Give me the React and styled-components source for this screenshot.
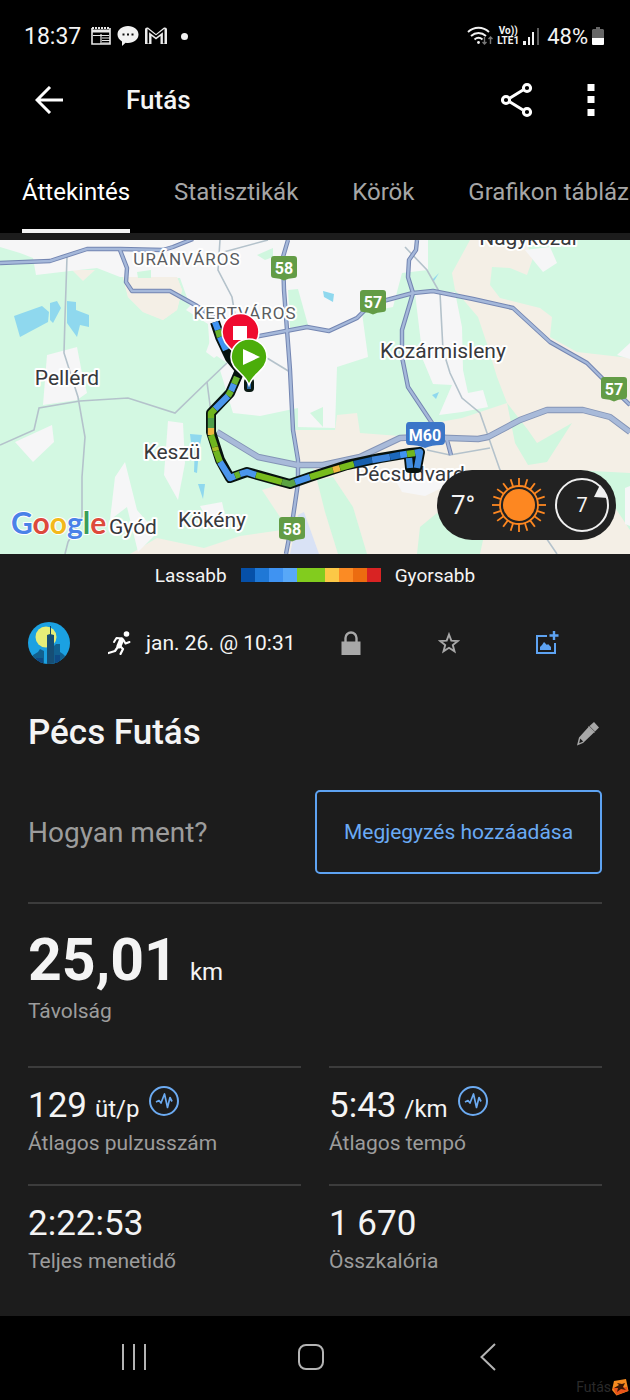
import React from "react";
import styled, { createGlobalStyle } from "styled-components";

const tabs = ["Áttekintés", "Statisztikák", "Körök", "Grafikon táblázatok"];

const paceColors = [
    "#0650a8",
    "#1f78d6",
    "#3f93f2",
    "#58a8f8",
    "#82cc1e",
    "#82cc1e",
    "#fcc846",
    "#fb8b24",
    "#ec6c10",
    "#d92323",
];

const stats = [
    { value: "129", unit: "üt/p", label: "Átlagos pulzusszám", chart: true },
    { value: "5:43", unit: "/km", label: "Átlagos tempó", chart: true },
    { value: "2:22:53", label: "Teljes menetidő" },
    { value: "1 670", label: "Összkalória" },
];

const urban = [
    "0,0 0,7 20,13 33,18 36,35 70,31 97,28 120,37 180,38 190,66 186,70 208,84 210,112 220,117 208,110 227,123 220,130 233,173 260,176 298,168 298,187 335,188 337,127 368,117 362,73 393,67 402,33 428,30 428,0",
    "415,53 455,52 462,87 463,130 468,153 483,150 488,167 462,172 439,175 452,145 433,144 423,120",
    "47,115 77,107 82,133 87,153 77,160 43,165",
    "15,202 52,185 54,202 33,222",
    "168,181 183,183 185,223 178,260 164,235",
    "125,222 137,270 157,293 138,312 127,267 110,280 115,237",
    "200,266 222,262 226,280 210,284",
    "217,82 206,112 214,118 228,108",
];

const farmland = [
    "470,0 452,33 455,50 478,77 488,107 497,137 507,163 462,178 440,182 400,196 360,193 357,173 337,175 335,190 293,190 299,222 320,232 262,250 282,280 278,314 630,314 630,118 577,112 550,97 552,77 540,68 500,58 490,45 492,27 510,28 527,35 533,18 525,0",
    "72,30 95,30 83,41",
    "123,37 177,37 182,50 177,70 163,80 143,72 128,57",
    "130,314 157,298 204,308 240,296 282,290 282,314",
];

const parks = [
    "288,50 298,49 308,85 290,88",
    "257,15 273,8 273,17 265,20",
    "137,32 151,30 151,38 138,38",
    "310,173 323,167 323,187",
    "507,163 528,190 537,203 572,183 547,222 528,225 515,203",
    "317,240 333,237 353,267 367,314 338,314 325,272",
    "573,230 630,233 630,290 610,260",
    "417,314 420,287 437,273 483,300 480,314",
];

const settlements = [
    "525,10 543,32 557,23 550,7",
    "617,115 630,103 630,119",
    "625,248 630,246 630,286 625,284",
    "394,238 426,230 450,244 425,256 402,252",
];

const water = [
    "14,76 42,66 49,72 48,82 20,97",
    "50,63 57,61 61,68 53,83 50,80",
    "67,61 76,62 76,70 89,75 89,87 80,85 77,97 67,83",
    "190,194 202,195 199,210 197,233 194,232 195,203 191,203",
    "198,244 205,244 203,259",
    "323,51 334,54 333,62 324,57",
    "432,155 439,152 436,159",
    "432,40 439,33 434,41",
];

const lanes = [
    "67,17 65,77 64,113 78,157 85,197 82,237 82,277 68,302 65,314",
    "0,205 34,190 39,168 80,161 128,158 175,173 207,142 227,123",
    "207,142 210,165 211,175",
    "267,118 290,132",
    "220,0 218,30 232,57 235,75",
    "220,13 268,0",
    "405,7 427,30 440,53 443,110 450,133 462,158 480,173 500,230 557,314",
    "427,210 450,215 490,208",
];

const roads = [
    "0,23 50,21 87,9 120,9 163,10 173,7 193,-1",
    "120,10 127,28 126,42 132,51 170,51 197,66 215,78",
    "288,0 283,17 284,50 290,130 293,190 298,220 298,243 293,277 286,314",
    "254,97 307,87 329,91 357,78 367,68 383,61 413,53 433,51 473,59 513,68 550,102 587,123 602,138 630,165",
    "417,0 416,10 409,20 408,37 413,53 402,90 402,117 408,147 432,183 447,200 451,215",
];

const motorway =
    "217,192 258,217 297,225 323,225 360,217 400,198 420,197 478,199 488,197 520,180 547,170 583,170 610,177 630,192";

const route =
    "215,82 220,97 230,118 240,130 237,137 230,153 211,173 211,192 220,220 230,238 247,232 290,244 310,237 347,225 380,218 410,213 420,212 417,228 410,228 409,218";

const pace = [
    ["215,82 218,90", "#3f93f2"],
    ["218,90 220,97", "#69b32d"],
    ["220,97 226,110", "#3f93f2"],
    ["237,137 234,144", "#69b32d"],
    ["234,144 231,151", "#4b96ec"],
    ["231,151 228,156", "#69b32d"],
    ["228,156 215,169", "#4b96ec"],
    ["215,169 211,173 211,178", "#6fb51f"],
    ["211,178 211,188", "#4c9e49"],
    ["211,188 211,195", "#efb742"],
    ["211,195 215,207", "#6fb51f"],
    ["215,207 216,211", "#a8bd22"],
    ["216,211 220,222", "#6fb51f"],
    ["220,222 230,238 235,236", "#4b96ec"],
    ["235,236 240,234", "#69b32d"],
    ["240,234 247,232 256,235", "#4b96ec"],
    ["256,235 282,242", "#78bc1d"],
    ["282,242 290,244 295,242", "#5ba243"],
    ["295,242 310,237", "#4b96ec"],
    ["310,237 333,230", "#78bc1d"],
    ["333,230 340,228", "#efb742"],
    ["340,228 354,224", "#78bc1d"],
    ["354,224 372,220", "#175fae"],
    ["372,220 390,217", "#3f86dc"],
    ["390,217 400,215", "#1c68bb"],
    ["400,215 407,214", "#3f93f2"],
    ["407,214 415,213", "#6fb51f"],
    ["415,213 420,212 417,228", "#3f8be0"],
    ["410,228 409,218", "#3f8be0"],
];

const places = [
    { name: "Nagykozár", x: 529, y: 5 },
    { name: "Kozármisleny", x: 443, y: 118 },
    { name: "Pellérd", x: 67, y: 145 },
    { name: "Keszü", x: 172, y: 219 },
    { name: "Kökény", x: 212, y: 287 },
    { name: "Gyód", x: 133, y: 294 },
    { name: "Pécsudvard", x: 410, y: 241 },
];

const shields = [
    { text: "58", x: 284, y: 29 },
    { text: "57", x: 373, y: 63 },
    { text: "57", x: 614, y: 150 },
    { text: "58", x: 292, y: 290 },
];

const sunRays = Array.from({ length: 20 }, (_, i) => i * 18);

const App = () => {
    return (
        <Screen>
            <GlobalStyle />
            <StatusBar>
                <StatusGroup>
                    <span>18:37</span>
                    <NewsIcon />
                    <ChatIcon />
                    <MailIcon />
                    <Dot />
                </StatusGroup>
                <StatusGroup $tight>
                    <WifiIcon />
                    <Volte>
                        <span>Vo))</span>
                        <span>LTE1</span>
                    </Volte>
                    <SignalIcon />
                    <Percent>48%</Percent>
                    <BatteryIcon />
                </StatusGroup>
            </StatusBar>

            <AppBar>
                <IconButton aria-label="Vissza">
                    <BackIcon />
                </IconButton>
                <h1>Futás</h1>
                <IconButton aria-label="Megosztás">
                    <ShareIcon />
                </IconButton>
                <IconButton aria-label="Továbbiak">
                    <MoreIcon />
                </IconButton>
            </AppBar>

            <Tabs role="tablist">
                {tabs.map((tab, idx) => (
                    <Tab
                        key={tab}
                        role="tab"
                        aria-selected={idx === 0}
                        $active={idx === 0}
                    >
                        <span>{tab}</span>
                    </Tab>
                ))}
            </Tabs>

            <MapPanel>
                <RouteMap />
                <Weather>
                    <Temperature>7°</Temperature>
                    <SunIcon />
                    <WindIcon />
                </Weather>
            </MapPanel>

            <Legend>
                <span>Lassabb</span>
                <PaceScale>
                    {paceColors.map((color, idx) => (
                        <PaceStep key={idx} $color={color} />
                    ))}
                </PaceScale>
                <span>Gyorsabb</span>
            </Legend>

            <Content>
                <MetaRow>
                    <AvatarIcon />
                    <RunDate>
                        <RunnerIcon />
                        <span>jan. 26. @ 10:31</span>
                    </RunDate>
                    <Actions>
                        <IconButton aria-label="Adatvédelem">
                            <LockIcon />
                        </IconButton>
                        <IconButton aria-label="Kedvenc">
                            <StarIcon />
                        </IconButton>
                        <IconButton aria-label="Kép hozzáadása">
                            <AddImageIcon />
                        </IconButton>
                    </Actions>
                </MetaRow>

                <TitleRow>
                    <h2>Pécs Futás</h2>
                    <EditButton aria-label="Szerkesztés">
                        <PencilIcon />
                    </EditButton>
                </TitleRow>

                <NoteRow>
                    <p>Hogyan ment?</p>
                    <NoteButton>Megjegyzés hozzáadása</NoteButton>
                </NoteRow>

                <Distance>
                    <Value>
                        <Big>25,01</Big>
                        <Unit>km</Unit>
                    </Value>
                    <Label>Távolság</Label>
                </Distance>

                <StatGrid>
                    {stats.map((stat) => (
                        <Stat key={stat.label}>
                            <Value>
                                <span>{stat.value}</span>
                                {stat.unit && <Unit>{stat.unit}</Unit>}
                                {stat.chart && (
                                    <ChartButton
                                        aria-label={`${stat.label} grafikon`}
                                    >
                                        <PulseIcon />
                                    </ChartButton>
                                )}
                            </Value>
                            <Label>{stat.label}</Label>
                        </Stat>
                    ))}
                </StatGrid>
            </Content>

            <NavBar>
                <IconButton aria-label="Legutóbbiak">
                    <RecentsIcon />
                </IconButton>
                <IconButton aria-label="Kezdőlap">
                    <HomeIcon />
                </IconButton>
                <IconButton aria-label="Vissza a rendszerben">
                    <ChevronIcon />
                </IconButton>
                <Watermark>
                    <span>Futás</span>
                    <WatermarkIcon />
                </Watermark>
            </NavBar>
        </Screen>
    );
};

export default App;

const RouteMap = () => (
    <svg
        viewBox="0 0 630 314"
        preserveAspectRatio="xMidYMid slice"
        role="img"
        aria-label="Útvonal térképe"
    >
        <rect width="630" height="314" fill="#d3f8e2" />
        <g fill="#f4efe6">
            {farmland.map((points) => (
                <polygon key={points} points={points} />
            ))}
        </g>
        <g fill="#f6f6f7">
            {urban.map((points) => (
                <polygon key={points} points={points} />
            ))}
        </g>
        <polygon points={farmland[2]} fill="#f4efe6" />
        <g fill="#d0f7df">
            {parks.map((points) => (
                <polygon key={points} points={points} />
            ))}
        </g>
        <g fill="#f6f6f7">
            {settlements.map((points) => (
                <polygon key={points} points={points} />
            ))}
        </g>
        <polygon points="298,275 304,272 319,314 290,314" fill="#d9e2f5" />
        <g fill="#8fd8ee">
            {water.map((points) => (
                <polygon key={points} points={points} />
            ))}
        </g>
        <g fill="none" stroke="#b4c2cb" strokeWidth="1.6">
            {lanes.map((points) => (
                <polyline key={points} points={points} />
            ))}
        </g>
        <g fill="none" strokeLinejoin="round">
            {roads.map((points) => (
                <polyline
                    key={points}
                    points={points}
                    stroke="#7486b2"
                    strokeWidth="4.4"
                />
            ))}
            <polyline points={motorway} stroke="#8494b6" strokeWidth="6.4" />
            {roads.map((points) => (
                <polyline
                    key={points}
                    points={points}
                    stroke="#a5b8da"
                    strokeWidth="2.4"
                />
            ))}
            <polyline points={motorway} stroke="#a8bad9" strokeWidth="4.6" />
        </g>

        <g
            fontFamily="Roboto, sans-serif"
            textAnchor="middle"
            stroke="#fff"
            strokeWidth="4"
            strokeLinejoin="round"
            paintOrder="stroke"
            fill="#37393c"
        >
            <g fontSize="17" letterSpacing="1" fill="#5a5d61">
                <text x="187" y="25">
                    URÁNVÁROS
                </text>
                <text x="245" y="79">
                    KERTVÁROS
                </text>
            </g>
            <g fontSize="21">
                {places.map((place) => (
                    <text key={place.name} x={place.x} y={place.y}>
                        {place.name}
                    </text>
                ))}
            </g>
        </g>

        <g fill="none" strokeLinejoin="round">
            <polyline points={route} stroke="#07120e" strokeWidth="10" />
            {pace.map(([points, color]) => (
                <polyline
                    key={points}
                    points={points}
                    stroke={color}
                    strokeWidth="6.4"
                />
            ))}
        </g>
        <rect x="244" y="138" width="10" height="14" rx="4" fill="#0b1a14" />
        <rect x="247" y="141" width="4" height="8" fill="#2f6da6" />

        {shields.map((shield) => (
            <g
                key={`${shield.x}-${shield.y}`}
                transform={`translate(${shield.x} ${shield.y})`}
            >
                <path
                    d="M-10 -13H10Q13 -13 13 -10V6Q13 9 10 9Q4 9 0 11.500Q-4 9 -10 9Q-13 9 -13 6V-10Q-13 -13 -10 -13Z"
                    fill="#639c46"
                />
                <ShieldText y="5">{shield.text}</ShieldText>
            </g>
        ))}
        <path
            d="M409 182H441Q445 182 445 186V201Q445 205 441 205Q432 205 425 208Q418 205 409 205Q406 205 406 201V186Q406 182 409 182Z"
            fill="#3b76c8"
        />
        <ShieldText x="425" y="201">
            M60
        </ShieldText>

        <path
            d="M240 122C236 110 222 106 222 92A18 18 0 0 1 259 92C259 106 244 110 240 122Z"
            fill="#ef0b2f"
            stroke="#fff"
            strokeWidth="1.6"
        />
        <rect x="233" y="86" width="14" height="14" fill="#fff" />
        <path
            d="M249 145C245 133 231 130 231 117A18 18 0 0 1 267 117C267 130 253 133 249 145Z"
            fill="#4bad0a"
            stroke="#fff"
            strokeWidth="1.6"
        />
        <path d="M243 109L260 117L243 125Z" fill="#fff" />

        <GoogleText x="11" y="294">
            <tspan fill="#4a82e8">G</tspan>
            <tspan fill="#dc4a3c">o</tspan>
            <tspan fill="#f2b91c">o</tspan>
            <tspan fill="#4a82e8">g</tspan>
            <tspan fill="#3b9e58">l</tspan>
            <tspan fill="#dc4a3c">e</tspan>
        </GoogleText>
    </svg>
);

const NewsIcon = () => (
    <svg width="20" height="18" viewBox="0 0 20 18" fill="none" stroke="#e8e8e8">
        <path d="M1 1v16h18V1" strokeWidth="1.6" />
        <path d="M1 1h18" strokeWidth="2" strokeDasharray="2 1" />
        <path d="M1 4h18" strokeWidth="3" />
        <path d="M10 7v10M2 8.500h16" strokeWidth="1.2" />
        <path d="M11 11h8M11 13.500h8M11 16h8" strokeWidth="1.2" />
    </svg>
);

const ChatIcon = () => (
    <svg width="22" height="20" viewBox="0 0 22 20">
        <path
            d="M11 0C17 0 21.500 3.600 21.500 8.500S17 17 11 17c-.8 0-1.600 0-2.400-.2L5 20v-4.600C2.300 13.900.5 11.400.5 8.500.5 3.600 5 0 11 0z"
            fill="#f2f2f2"
        />
        <path
            d="M5.500 8.500h2M10 8.500h2M14.500 8.500h2"
            stroke="#111"
            strokeWidth="2"
        />
    </svg>
);

const MailIcon = () => (
    <svg width="22" height="18" viewBox="0 0 22 18">
        <path
            d="M0 17V2.500Q0 0 3 .5L11 7 19 .5Q22 0 22 2.500V17H15.500V9L11 12.500 6.500 9V17z"
            fill="#ececec"
        />
        <path
            d="M3.300 16.500V3.500L11 9.500 18.700 3.500V16.500"
            fill="none"
            stroke="#000"
            strokeWidth="1.600"
        />
    </svg>
);

const WifiIcon = () => (
    <svg width="26" height="20" viewBox="0 0 26 20" fill="none">
        <g stroke="#f2f2f2" strokeWidth="1.900">
            <path d="M1 6C7 .3 16 .3 22 6" />
            <path d="M4 10c4.500-4 10.500-4 15 0" />
            <path d="M7.500 13.500c2.600-2.300 5.400-2.300 8 0" />
        </g>
        <circle cx="11.500" cy="16.500" r="1.400" fill="#f2f2f2" />
        <path
            d="M17.500 11v7m-2-2l2 2 2-2M23.500 18v-7m-2 2l2-2 2 2"
            stroke="#777"
            strokeWidth="1.400"
        />
    </svg>
);

const SignalIcon = () => (
    <svg width="16" height="17" viewBox="0 0 16 17">
        <path d="M0 13h3v4H0zM5 9h2v8H5zM9 4h2v13H9z" fill="#f2f2f2" />
        <path d="M14 0h2v17h-2z" fill="#5a5a5a" />
    </svg>
);

const BatteryIcon = () => (
    <svg width="12" height="18" viewBox="0 0 12 18">
        <path d="M4 0h4v2h3l1 1v8H0V3l1-1h3z" fill="#666" />
        <path d="M0 11h12v6q0 1-1 1H1q-1 0-1-1z" fill="#fff" />
    </svg>
);

const BackIcon = () => (
    <svg width="28" height="28" viewBox="0 0 28 28" fill="none">
        <path d="M15 1L2 14l13 13M2 14h26" stroke="#fff" strokeWidth="3" />
    </svg>
);

const ShareIcon = () => (
    <svg width="32" height="36" viewBox="0 0 32 36" fill="none">
        <g stroke="#fff" strokeWidth="3">
            <path d="M9 16L22 8M9 20l13 8" />
            <circle cx="5" cy="18" r="3.600" />
            <circle cx="26" cy="6" r="3.600" />
            <circle cx="26" cy="30" r="3.600" />
        </g>
    </svg>
);

const MoreIcon = () => (
    <svg width="8" height="34" viewBox="0 0 8 34" fill="#fff">
        <path d="M0.500 1h7v7h-7zM0.500 13h7v7h-7zM0.500 26h7v7h-7z" />
    </svg>
);

const SunIcon = () => (
    <svg width="56" height="56" viewBox="-28 -28 56 56">
        <circle r="16" fill="#fd8721" />
        <circle r="19" fill="none" stroke="#fd8721" strokeWidth="1.800" />
        {sunRays.map((angle) => (
            <path
                key={angle}
                d="M0 -19V-27"
                stroke="#fd8721"
                strokeWidth="1.800"
                transform={`rotate(${angle})`}
            />
        ))}
    </svg>
);

const WindIcon = () => (
    <svg width="56" height="56" viewBox="-28 -28 56 56">
        <circle r="26" fill="none" stroke="#f0f0f0" strokeWidth="2" />
        <path d="M18 -20L26 -7L12 -8Z" fill="#f0f0f0" />
        <WindText y="7">7</WindText>
    </svg>
);

const AvatarIcon = () => (
    <svg width="42" height="42" viewBox="0 0 42 42">
        <clipPath id="avatar">
            <circle cx="21" cy="21" r="21" />
        </clipPath>
        <g clipPath="url(#avatar)">
            <rect width="42" height="42" fill="#1ba1e2" />
            <circle cx="18" cy="15" r="10.500" fill="#e6ee78" />
            <path
                d="M5 42V33l5-3 2-3 4 2v13zM26 42V24l2-2h4v8l3 2 4 4v6z"
                fill="#12608f"
            />
            <path d="M22.500 4v10" stroke="#15425f" strokeWidth="1" />
            <path d="M19 42V13l3-1 4 1v29z" fill="#164e75" />
            <path d="M8 42v-6h7v6zM27 42v-9h5v9z" fill="#0f4b86" />
        </g>
    </svg>
);

const RunnerIcon = () => (
    <svg width="24" height="24" viewBox="0 0 24 24" fill="none">
        <circle cx="18.500" cy="3" r="2.800" fill="#fff" />
        <g stroke="#fff" strokeLinecap="round" strokeLinejoin="round">
            <path d="M13.500 9l-2.500 6" strokeWidth="5" />
            <path d="M14 7.500L8.500 7 6 11M15.500 9l2 3.500 4-1.500" strokeWidth="2" />
            <path d="M10.500 15L7 20l-6.500 2" strokeWidth="2.200" />
            <path d="M12 15l3 3-2.500 5" strokeWidth="2.200" />
        </g>
    </svg>
);

const LockIcon = () => (
    <svg width="20" height="24" viewBox="0 0 20 24">
        <path
            d="M4.500 12V7a5.500 5.500 0 0 1 11 0v5"
            fill="none"
            stroke="#a8a8a8"
            strokeWidth="2.400"
        />
        <path d="M.5 10.500h19V24H.5z" fill="#a8a8a8" />
    </svg>
);

const StarIcon = () => (
    <svg width="22" height="22" viewBox="0 0 22 22">
        <path
            d="M11 2.500l2.300 6.200 6.500.3-5 4 1.700 6.400-5.500-3.600-5.500 3.600 1.700-6.400-5-4 6.500-.3z"
            fill="none"
            stroke="#a8a8a8"
            strokeWidth="1.900"
        />
    </svg>
);

const AddImageIcon = () => (
    <svg width="24" height="24" viewBox="0 0 24 24" fill="none">
        <path d="M12 5H2v17h18V12" stroke="#5ea3f2" strokeWidth="2" />
        <path d="M19 0v9M14.500 4.500h9" stroke="#5ea3f2" strokeWidth="2.400" />
        <path d="M5 19v-3l2-2 2-3 3 3 1-1 3 3v3z" fill="#5ea3f2" />
    </svg>
);

const PencilIcon = () => (
    <svg width="24" height="24" viewBox="0 0 24 24">
        <path d="M18 0l5 5.500-4 4-5.500-5.500zM12.500 5l5.500 5.500L7 21l-6 2.500 2-8z" fill="#a8a8a8" />
        <path d="M13 4l6 6-1 1-6-6z" fill="#a8a8a8" />
        <path d="M4.200 16.500l3 3-4 1.800z" fill="#1c1c1c" />
    </svg>
);

const PulseIcon = () => (
    <svg width="30" height="30" viewBox="0 0 30 30" fill="none">
        <circle cx="15" cy="15" r="14" stroke="#6cabf2" strokeWidth="2" />
        <path
            d="M7 16l3-1.500 2 2.500 3.500-9 3 13.500 2.500-10 2 4"
            stroke="#6cabf2"
            strokeWidth="1.700"
            strokeLinejoin="round"
        />
    </svg>
);

const RecentsIcon = () => (
    <svg width="26" height="28" viewBox="0 0 26 28">
        <path d="M2 1v26M13 1v26M24 1v26" stroke="#b4b4b4" strokeWidth="2" />
    </svg>
);

const HomeIcon = () => (
    <svg width="28" height="28" viewBox="0 0 28 28">
        <rect
            x="2"
            y="2"
            width="24"
            height="24"
            rx="7"
            fill="none"
            stroke="#b4b4b4"
            strokeWidth="2"
        />
    </svg>
);

const ChevronIcon = () => (
    <svg width="16" height="28" viewBox="0 0 16 28">
        <path
            d="M15 1L1.500 14 15 27"
            fill="none"
            stroke="#b4b4b4"
            strokeWidth="2"
        />
    </svg>
);

const WatermarkIcon = () => (
    <svg width="18" height="18" viewBox="0 0 18 18">
        <path d="M3 3l12-2 2.500 12-12 4.500L1 12z" fill="#f58a1f" />
        <path d="M2 10l14-1 1 4-11.500 4z" fill="#e8541a" />
        <path
            d="M3 10l5-3-2-2 5 1 3-1-2 4 3 3-5-1-4 3 1-4z"
            fill="#3a1606"
        />
    </svg>
);

const GlobalStyle = createGlobalStyle`
    * {
        box-sizing: border-box;
    }

    body {
        margin: 0;
        background: #1c1c1c;
        color: #f4f4f4;
        font-family: Roboto, sans-serif;
    }

    h1, h2, p {
        margin: 0;
    }

    button {
        padding: 0;
        border: 0;
        background: none;
        color: inherit;
        font: inherit;
    }

    svg {
        display: block;
        flex: none;
    }
`;

const Screen = styled.main`
    display: flex;
    flex-direction: column;
    min-height: 100vh;
`;

const StatusBar = styled.header`
    display: flex;
    justify-content: space-between;
    align-items: center;
    height: 72px;
    padding: 0 26px 0 24px;
    background: #000;
    font-size: 23px;
`;

const StatusGroup = styled.div`
    display: flex;
    align-items: center;
    gap: ${({ $tight }) => ($tight ? "4px" : "6px")};

    > span:first-child {
        margin-right: 4px;
    }
`;

const Dot = styled.i`
    width: 7px;
    height: 7px;
    margin-left: 8px;
    border-radius: 50%;
    background: #f2f2f2;
`;

const Volte = styled.div`
    display: flex;
    flex-direction: column;
    align-items: center;
    font-size: 10px;
    font-weight: 700;
    line-height: 10px;
`;

const Percent = styled.span`
    margin-left: 4px;
    font-size: 22px;
`;

const IconButton = styled.button`
    display: flex;
    justify-content: center;
    align-items: center;
    min-height: 42px;
`;

const AppBar = styled.div`
    display: flex;
    align-items: center;
    height: 56px;
    background: #000;

    > h1 {
        flex: 1;
        padding-left: 28px;
        font-size: 26px;
        font-weight: 500;
    }

    > button {
        width: 70px;
    }

    > button:first-child {
        width: 98px;
    }

    > button:last-child {
        width: 78px;
    }
`;

const Tabs = styled.div`
    display: flex;
    height: 105px;
    overflow: hidden;
    background: #000;
`;

const Tab = styled.button`
    flex: none;
    min-width: 126px;
    padding: 0 22px;
    color: ${({ $active }) => ($active ? "#fff" : "#a6a6a6")};
    font-size: 24px;
    white-space: nowrap;

    > span {
        display: flex;
        justify-content: center;
        align-items: center;
        height: 105px;
        padding-top: 26px;
        border-bottom: 4px solid
            ${({ $active }) => ($active ? "#f4f4f4" : "transparent")};
    }
`;

const MapPanel = styled.section`
    position: relative;
    margin-top: 7px;

    > svg {
        width: 100%;
        height: 314px;
    }
`;

const ShieldText = styled.text`
    fill: #fff;
    font-size: 16px;
    font-weight: 700;
    text-anchor: middle;
`;

const GoogleText = styled.text`
    font-family: Lato, sans-serif;
    font-size: 30px;
    font-weight: 700;
    stroke: #fff;
    stroke-width: 2px;
    paint-order: stroke;
`;

const Weather = styled.div`
    position: absolute;
    right: 14px;
    bottom: 14px;
    display: flex;
    align-items: center;
    gap: 7px;
    height: 70px;
    padding: 0 6px 0 14px;
    border-radius: 35px;
    background: #222;
`;

const Temperature = styled.span`
    width: 33px;
    font-size: 26px;
`;

const WindText = styled.text`
    fill: #f4f4f4;
    font-size: 20px;
    text-anchor: middle;
`;

const Legend = styled.div`
    display: flex;
    justify-content: center;
    align-items: center;
    gap: 14px;
    height: 42px;
    font-size: 19px;
`;

const PaceScale = styled.div`
    display: flex;
`;

const PaceStep = styled.i`
    width: 14px;
    height: 14px;
    background: ${({ $color }) => $color};
`;

const Content = styled.div`
    flex: 1;
    padding: 26px 28px 14px;
`;

const MetaRow = styled.div`
    display: flex;
    align-items: center;
    gap: 38px;
    padding-right: 6px;
`;

const RunDate = styled.div`
    display: flex;
    align-items: center;
    flex: 1;
    gap: 14px;
    font-size: 21px;
    white-space: nowrap;
`;

const Actions = styled.div`
    display: flex;
    margin-left: -38px;

    > button {
        width: 98px;
    }
`;

const TitleRow = styled.div`
    display: flex;
    justify-content: space-between;
    align-items: center;
    height: 40px;
    margin-top: 48px;

    > h2 {
        font-size: 35px;
        font-weight: 500;
    }
`;

const EditButton = styled(IconButton)`
    padding: 4px 2px 0 0;
`;

const NoteRow = styled.div`
    display: grid;
    grid-template-columns: 1fr 1fr;
    align-items: center;
    margin: 38px 0 28px;

    > p {
        color: #9c9c9c;
        font-size: 28px;
    }
`;

const NoteButton = styled.button`
    && {
        height: 84px;
        border: 2px solid #5ea3f2;
        border-radius: 5px;
        color: #6aaaf4;
        font-size: 21px;
    }
`;

const Distance = styled.div`
    padding: 26px 0 42px;
    border-top: 2px solid #3c3c3c;
`;

const StatGrid = styled.div`
    display: grid;
    grid-template-columns: 1fr 1fr;
    column-gap: 28px;
`;

const Stat = styled.div`
    padding: 18px 0 28px;
    border-top: 2px solid #3c3c3c;
`;

const Value = styled.div`
    display: flex;
    align-items: baseline;
    gap: 8px;
    height: 42px;
    font-size: 35px;
    line-height: 40px;

    ${Distance} & {
        height: 68px;
    }
`;

const Big = styled.strong`
    margin-right: 4px;
    font-size: 59px;
    font-weight: 700;
    line-height: 60px;
`;

const Unit = styled.span`
    font-size: 24px;
`;

const ChartButton = styled.button`
    align-self: flex-start;
    margin-left: 2px;
`;

const Label = styled.div`
    margin-top: 2px;
    color: #9c9c9c;
    font-size: 21px;
    line-height: 26px;

    ${Distance} & {
        margin-top: 0;
    }
`;

const NavBar = styled.nav`
    position: relative;
    display: grid;
    grid-template-columns: repeat(3, 1fr);
    align-items: center;
    height: 84px;
    padding: 0 54px 2px 46px;
    background: #000;
`;

const Watermark = styled.div`
    position: absolute;
    right: 1px;
    bottom: 4px;
    display: flex;
    align-items: center;
    color: #2a2a2a;
    font-size: 14px;
`;
